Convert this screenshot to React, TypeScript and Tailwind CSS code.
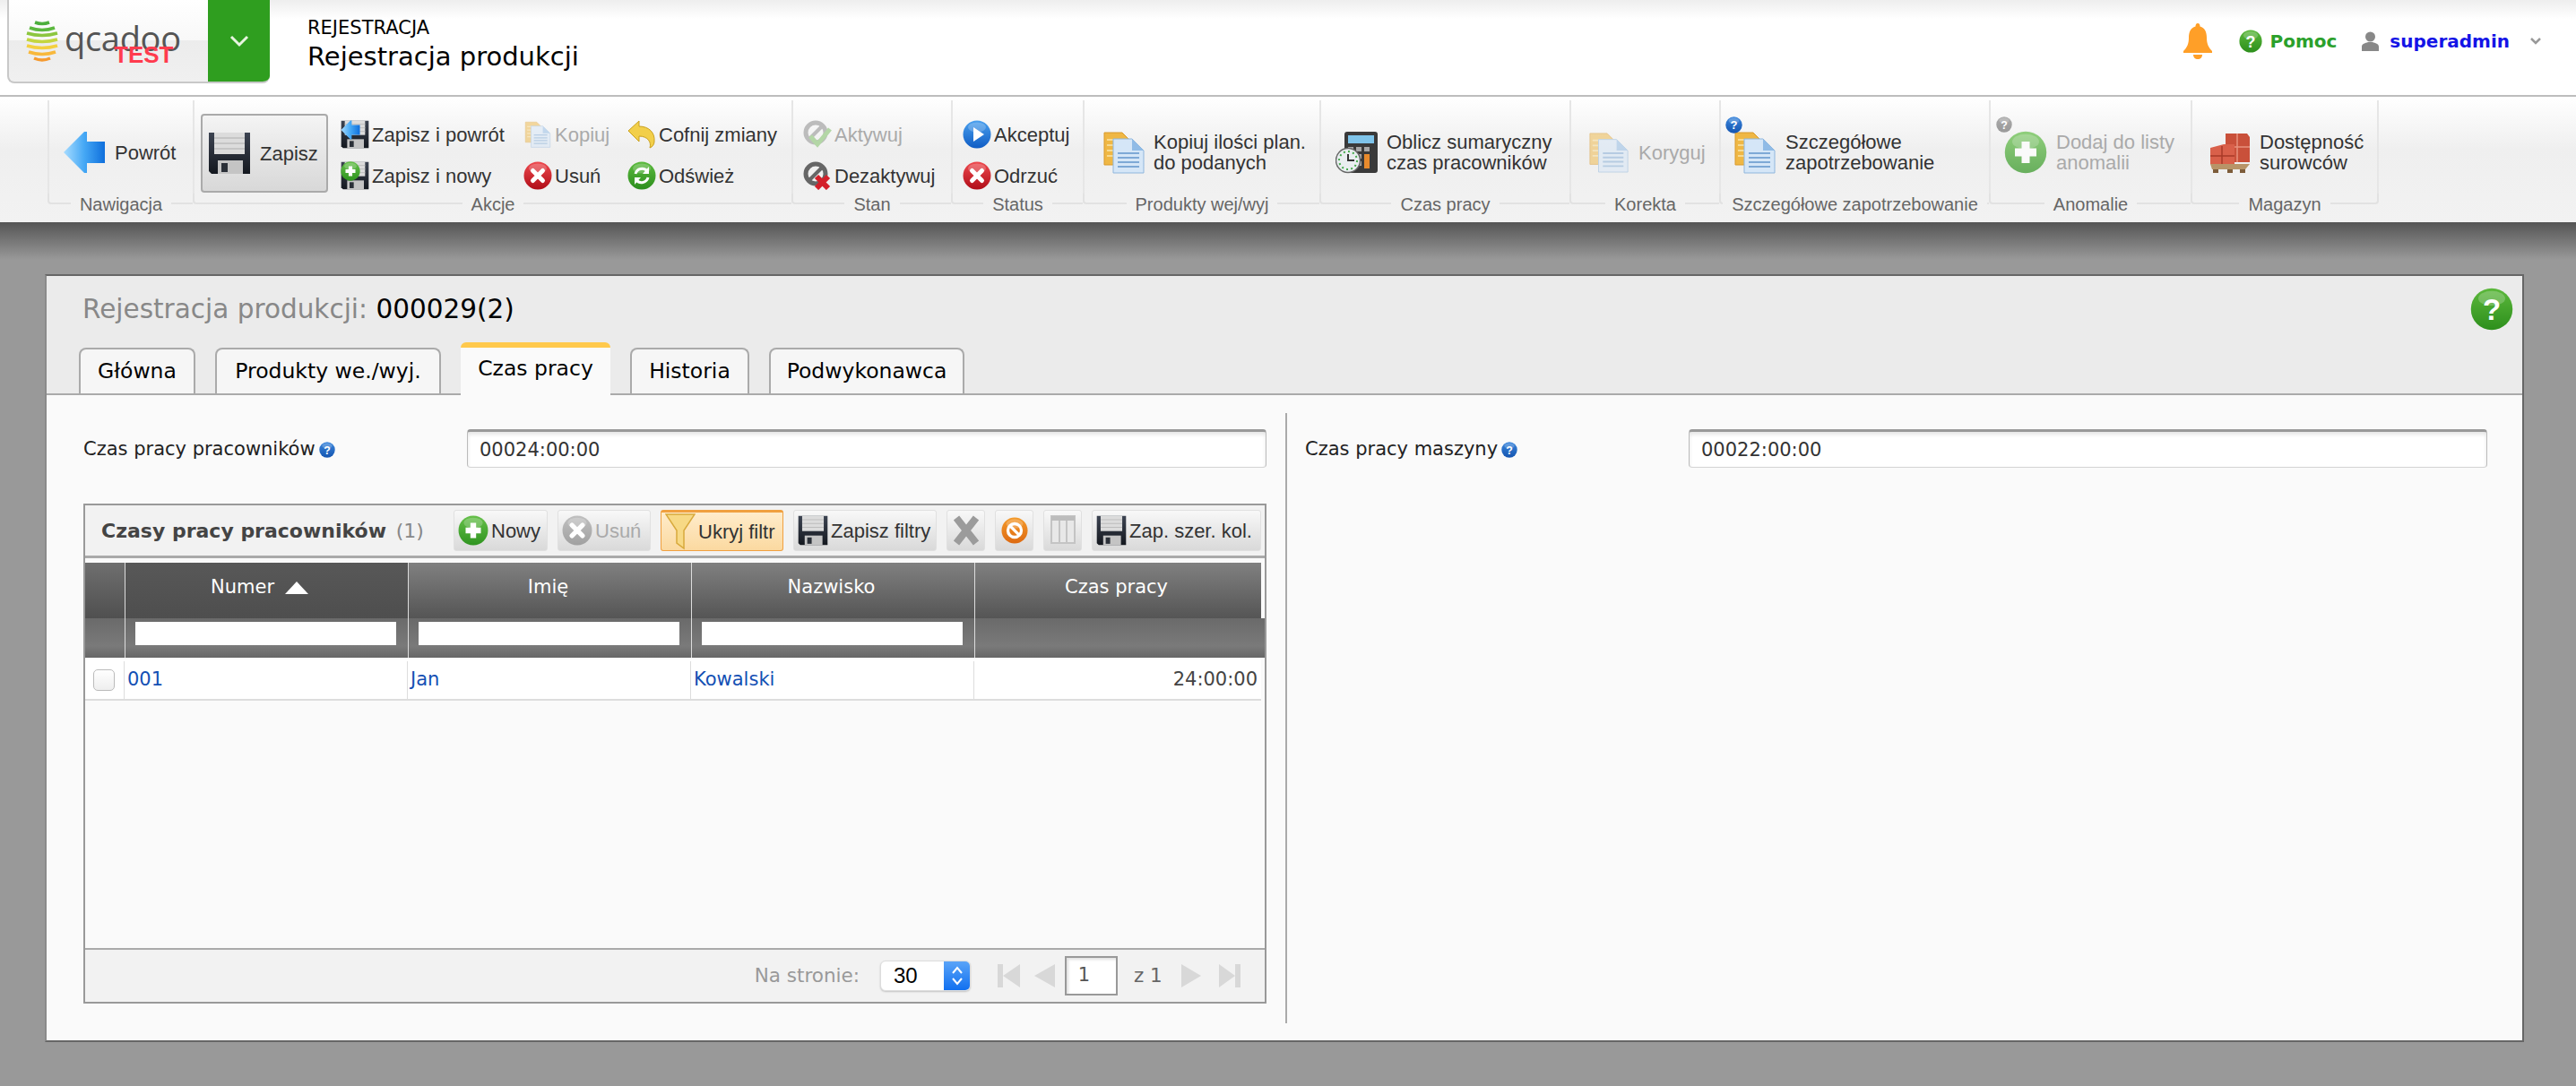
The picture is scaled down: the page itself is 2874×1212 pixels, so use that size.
import { useId, type ReactNode } from "react";

const ARIAL = "font-['Liberation_Sans',Arial,sans-serif]";
const LUCIDA = "font-['DejaVu_Sans',sans-serif]";

function Ball({ from, to, size = 32, children, className }: { from: string; to: string; size?: number; children?: ReactNode; className?: string }) {
  const id = useId();
  return (
    <svg width={size} height={size} viewBox="0 0 32 32" className={className}>
      <defs>
        <linearGradient id={id} x1="0" y1="0" x2="0" y2="1">
          <stop offset="0" stopColor={from} />
          <stop offset="1" stopColor={to} />
        </linearGradient>
      </defs>
      <circle cx="16" cy="16" r="15.5" fill={`url(#${id})`} />
      <ellipse cx="16" cy="8" rx="10" ry="5.5" fill="#fff" opacity="0.22" />
      {children}
    </svg>
  );
}

const XMark = ({ color = "#fff" }: { color?: string }) => (
  <path d="M10.5 10.5 L21.5 21.5 M21.5 10.5 L10.5 21.5" stroke={color} strokeWidth="5" strokeLinecap="round" />
);
const PlusMark = () => <path d="M16 8 V24 M8 16 H24" stroke="#fff" strokeWidth="6" />;
const RedX = ({ size = 32 }: { size?: number }) => (
  <Ball from="#ee4a4f" to="#b00d18" size={size}>
    <XMark />
  </Ball>
);
const GreenPlus = ({ size = 32, className }: { size?: number; className?: string }) => (
  <Ball from="#66c04a" to="#2f9420" size={size} className={className}>
    <PlusMark />
  </Ball>
);
const Refresh = () => (
  <Ball from="#5dbb3f" to="#2c8e1d">
    <path d="M9 14 A7.5 7.5 0 0 1 22 11 M23 18 A7.5 7.5 0 0 1 10 21" stroke="#fff" strokeWidth="3" fill="none" />
    <path d="M24 6 V14 H17 Z M8 26 V18 H15 Z" fill="#fff" />
  </Ball>
);
const HelpBall = ({ size = 26, from = "#5cb83c", to = "#2d8f1c" }: { size?: number; from?: string; to?: string }) => (
  <Ball from={from} to={to} size={size}>
    <text x="16" y="24" textAnchor="middle" fontSize="22" fontWeight="700" fill="#fff" fontFamily="Liberation Sans, sans-serif">?</text>
  </Ball>
);
const InfoDot = () => <HelpBall size={18} from="#3a86dc" to="#1555b0" />;

function Floppy({ size = 48, tone = "#14181f" }: { size?: number; tone?: string }) {
  const id = useId();
  return (
    <svg width={size} height={size} viewBox="0 0 48 48">
      <defs>
        <linearGradient id={id} x1="0" y1="0" x2="0" y2="1">
          <stop offset="0" stopColor="#3d4452" />
          <stop offset="1" stopColor={tone} />
        </linearGradient>
      </defs>
      <path d="M1 1 H47 V47 H4 L1 44 Z" fill={`url(#${id})`} />
      <rect x="7" y="1" width="34" height="24" fill="#dcdcdc" />
      <path d="M7 7 H41 M7 13 H41 M7 19 H41" stroke="#bdbdbd" strokeWidth="1.5" />
      <rect x="11" y="32" width="28" height="15" fill="#c4c4c4" />
      <rect x="15" y="35" width="7" height="10" fill="#2b3038" />
    </svg>
  );
}

function SaveWith({ children }: { children: ReactNode }) {
  return (
    <span className="relative flex h-[32px] w-[32px] shrink-0">
      <Floppy size={32} />
      {children}
    </span>
  );
}

function DocCopy({ size = 48, faded = false }: { size?: number; faded?: boolean }) {
  return (
    <svg width={size} height={size} viewBox="0 0 48 48" opacity={faded ? 0.5 : 1}>
      <path d="M2 2 H22 L30 10 V38 H2 Z" fill="#efb744" stroke="#d99a2b" />
      <path d="M5 10 H14 M5 16 H14 M5 22 H12 M5 28 H12" stroke="#f7da90" strokeWidth="2" />
      <path d="M12 9 H33 L46 22 V47 H12 Z" fill="#d5e6f7" stroke="#8fb6dc" />
      <path d="M33 9 V22 H46 Z" fill="#90bbe6" />
      <path d="M17 25 H41 M17 30 H41 M17 35 H41 M17 40 H41" stroke="#7ea9d6" strokeWidth="2" />
    </svg>
  );
}

function ArrowBack({ size = 48 }: { size?: number }) {
  const id = useId();
  return (
    <svg width={size} height={size} viewBox="0 0 48 48">
      <defs>
        <linearGradient id={id} x1="0" y1="0" x2="1" y2="0">
          <stop offset="0" stopColor="#a8dcff" />
          <stop offset="0.5" stopColor="#45a8f5" />
          <stop offset="1" stopColor="#0f6fdc" />
        </linearGradient>
      </defs>
      <path d="M1 24 L24 1 H27 V12 H47 V36 H27 V47 H24 Z" fill={`url(#${id})`} />
    </svg>
  );
}

const UndoArrow = () => (
  <svg width="32" height="32" viewBox="0 0 32 32">
    <path d="M1 12 L13 1 V7 C24 7 31 14 30 24 C30 27 28 30 25 31 C27 25 23 18 13 18 V24 Z" fill="#f2cf4a" stroke="#c9a01e" strokeWidth="1" />
  </svg>
);

const ActivateIcon = ({ deny = false }: { deny?: boolean }) => (
  <svg width="32" height="32" viewBox="0 0 32 32">
    <circle cx="14" cy="14" r="11" fill="none" stroke={deny ? "#666" : "#bcbcbc"} strokeWidth="5" />
    <path d="M7 21 L21 7" stroke={deny ? "#666" : "#bcbcbc"} strokeWidth="4" />
    {deny ? (
      <path d="M15 17 L28 30 M28 17 L15 30" stroke="#d3202a" strokeWidth="6" />
    ) : (
      <path d="M8 18 L16 27 L30 10" stroke="#b3d6a6" strokeWidth="5" fill="none" />
    )}
  </svg>
);

const Calculator = () => (
  <svg width="48" height="48" viewBox="0 0 48 48">
    <rect x="10" y="1" width="37" height="46" rx="3" fill="#3a3a3a" />
    <rect x="14" y="5" width="29" height="9" fill="#7fc4ea" />
    <g fill="#a8a8a8">
      <rect x="14" y="18" width="6" height="5" />
      <rect x="23" y="18" width="6" height="5" />
      <rect x="32" y="18" width="6" height="5" />
      <rect x="23" y="26" width="6" height="5" />
      <rect x="23" y="34" width="6" height="5" />
    </g>
    <rect x="32" y="26" width="6" height="16" fill="#e88a2c" />
    <circle cx="14" cy="33" r="13.5" fill="#e9eef0" stroke="#666" strokeWidth="1.5" />
    <circle cx="14" cy="33" r="10" fill="none" stroke="#43a84a" strokeWidth="2" strokeDasharray="2 3.2" />
    <path d="M14 26 V33 H21" stroke="#333" strokeWidth="2" fill="none" />
  </svg>
);

const Pallet = () => (
  <svg width="46" height="46" viewBox="0 0 46 46">
    <path d="M18 2 H42 L45 6 V34 H18 Z" fill="#c9503a" />
    <path d="M31 2 V34 M18 17 H45" stroke="#e8917e" strokeWidth="1.5" />
    <path d="M1 18 L16 14 H28 V36 H1 Z" fill="#d9604a" />
    <path d="M1 27 H28 M14 16 V36" stroke="#a83a28" strokeWidth="1.5" />
    <path d="M1 36 H45 L40 42 H3 Z" fill="#b89468" />
    <path d="M4 42 H10 V46 H4 Z M20 42 H26 V46 H20 Z M34 42 H40 V46 H34 Z" fill="#7d5c3a" />
  </svg>
);

const Funnel = () => (
  <svg width="34" height="42" viewBox="0 0 34 42">
    <path d="M1 2 H33 L21 20 V40 L13 34 V20 Z" fill="#f7d985" stroke="#d8a93c" strokeWidth="1.5" />
  </svg>
);

const NoEntry = () => (
  <Ball from="#f49a2a" to="#dd6a12" size={30}>
    <circle cx="16" cy="16" r="8" fill="none" stroke="#fff" strokeWidth="3.5" />
    <path d="M10 10 L22 22" stroke="#fff" strokeWidth="3.5" />
  </Ball>
);

const ColumnsIcon = () => (
  <svg width="28" height="34" viewBox="0 0 28 34">
    <rect x="1" y="1" width="26" height="30" fill="#e8e8e8" stroke="#c4c4c4" strokeWidth="2" />
    <rect x="1" y="1" width="26" height="5" fill="#bcbcbc" />
    <path d="M10 6 V31 M18 6 V31" stroke="#c4c4c4" strokeWidth="2" />
  </svg>
);

function Group({ width, label, children, last = false }: { width: number; label: string; children?: ReactNode; last?: boolean }) {
  return (
    <div style={{ width }} className="flex h-[128px] shrink-0 flex-col">
      <div className={`flex h-[104px] border-l-2 border-[#e6e6e6] pt-[22px] ${last ? "border-r-2" : ""}`}>{children}</div>
      <div className="flex h-[24px] items-start">
        <span className="h-[12px] flex-1 rounded-bl-[4px] border-b-2 border-l-2 border-[#e2e2e2]" />
        <span className={`px-[10px] text-[20px] leading-[24px] whitespace-nowrap text-[#666] ${ARIAL}`}>{label}</span>
        <span className={`h-[12px] flex-1 border-b-2 border-[#e2e2e2] ${last ? "rounded-br-[4px] border-r-2" : ""}`} />
      </div>
    </div>
  );
}

function Small({ icon, label, muted = false }: { icon: ReactNode; label: string; muted?: boolean }) {
  return (
    <div className={`flex h-[32px] items-center gap-[3px] text-[22px] whitespace-nowrap ${muted ? "text-[#aaa]" : "text-[#333]"} ${ARIAL}`}>
      <span className="flex w-[32px] shrink-0 justify-center">{icon}</span>
      {label}
    </div>
  );
}

function Big({ icon, lines, muted = false, ml, gap }: { icon: ReactNode; lines: string[]; muted?: boolean; ml: number; gap: number }) {
  return (
    <div style={{ marginLeft: ml, gap }} className={`flex h-[72px] items-center text-[22px] leading-[23px] whitespace-nowrap ${muted ? "text-[#aaa]" : "text-[#333]"} ${ARIAL}`}>
      {icon}
      <div>
        {lines.map((l) => (
          <div key={l}>{l}</div>
        ))}
      </div>
    </div>
  );
}

function Ribbon() {
  return (
    <div className="flex h-[140px] bg-[linear-gradient(#ffffff,#efefef_42%,#f2f2f2)] pt-[4px] pl-[53px]">
      <Group width={162} label="Nawigacja">
        <Big ml={15} gap={10} icon={<ArrowBack />} lines={["Powrót"]} />
      </Group>
      <Group width={668} label="Akcje">
        <div className={`-mt-[7px] ml-[7px] flex h-[88px] w-[142px] items-center gap-[10px] rounded-[4px] border-2 border-[#aaa] bg-[linear-gradient(#f4f4f4,#d8d8d8)] pl-[6px] text-[22px] text-[#333] ${ARIAL}`}>
          <Floppy />
          Zapisz
        </div>
        <div className="ml-[14px] flex w-[204px] flex-col gap-[14px]">
          <Small icon={<SaveWith><span className="absolute top-0 left-0"><ArrowBack size={22} /></span></SaveWith>} label="Zapisz i powrót" />
          <Small icon={<SaveWith><span className="absolute top-0 left-0"><GreenPlus size={22} /></span></SaveWith>} label="Zapisz i nowy" />
        </div>
        <div className="flex w-[116px] flex-col gap-[14px]">
          <Small muted icon={<DocCopy size={30} faded />} label="Kopiuj" />
          <Small icon={<RedX />} label="Usuń" />
        </div>
        <div className="flex flex-col gap-[14px]">
          <Small icon={<UndoArrow />} label="Cofnij zmiany" />
          <Small icon={<Refresh />} label="Odśwież" />
        </div>
      </Group>
      <Group width={178} label="Stan">
        <div className="ml-[11px] flex flex-col gap-[14px]">
          <Small muted icon={<ActivateIcon />} label="Aktywuj" />
          <Small icon={<ActivateIcon deny />} label="Dezaktywuj" />
        </div>
      </Group>
      <Group width={147} label="Status">
        <div className="ml-[11px] flex flex-col gap-[14px]">
          <Small
            icon={
              <Ball from="#4aa0ee" to="#0f5cc4">
                <path d="M12 8 L24 16 L12 24 Z" fill="#fff" />
              </Ball>
            }
            label="Akceptuj"
          />
          <Small icon={<RedX />} label="Odrzuć" />
        </div>
      </Group>
      <Group width={264} label="Produkty wej/wyj">
        <Big ml={20} gap={9} icon={<DocCopy />} lines={["Kopiuj ilości plan.", "do podanych"]} />
      </Group>
      <Group width={279} label="Czas pracy">
        <Big ml={16} gap={9} icon={<Calculator />} lines={["Oblicz sumaryczny", "czas pracowników"]} />
      </Group>
      <Group width={167} label="Korekta">
        <Big ml={19} gap={10} muted icon={<DocCopy size={46} faded />} lines={["Koryguj"]} />
      </Group>
      <Group width={301} label="Szczegółowe zapotrzebowanie">
        <div className="relative">
          <Big ml={14} gap={10} icon={<DocCopy />} lines={["Szczegółowe", "zapotrzebowanie"]} />
          <span className="absolute -top-[4px] left-[5px]">
            <HelpBall size={19} from="#3a86dc" to="#1555b0" />
          </span>
        </div>
      </Group>
      <Group width={225} label="Anomalie">
        <div className="relative">
          <Big ml={15} gap={10} muted icon={<GreenPlus size={48} className="opacity-70" />} lines={["Dodaj do listy", "anomalii"]} />
          <span className="absolute -top-[4px] left-[6px]">
            <HelpBall size={18} from="#aaa" to="#999" />
          </span>
        </div>
      </Group>
      <Group width={210} label="Magazyn" last>
        <Big ml={19} gap={10} icon={<Pallet />} lines={["Dostępność", "surowców"]} />
      </Group>
    </div>
  );
}

function Logo() {
  return (
    <div className="ml-[8px] flex h-[93px] w-[293px] shrink-0 overflow-hidden rounded-b-[8px] border-b-2 border-l-2 border-[#c8c8c8] bg-[linear-gradient(#ffffff,#f8f8f8_50%,#ececec_50%,#f0f0f0)]">
      <div className="relative w-[222px]">
        <div className="flex h-full items-center pl-[19px]">
          <svg width="36" height="48" viewBox="0 0 36 48">
            <g fill="none" strokeWidth="3.5">
              <path d="M10 3 Q18 6 26 3" stroke="#4cae3c" />
              <path d="M4 9 Q18 14 32 9" stroke="#5cb83f" />
              <path d="M1 15 Q18 20 35 15" stroke="#8cc63f" />
              <path d="M1 22 Q18 27 35 22" stroke="#c4d63f" />
              <path d="M1 29 Q18 34 35 29" stroke="#f4d03f" />
              <path d="M3 36 Q18 41 33 36" stroke="#f8b83c" />
              <path d="M9 43 Q18 47 27 43" stroke="#f59a30" />
            </g>
          </svg>
          <span className="ml-[7px] -mt-[8px] font-['Open_Sans',sans-serif] text-[38px] leading-none font-medium tracking-[-0.3px] text-[#555]">qcadoo</span>
        </div>
        <span className="absolute top-[48px] left-[117px] font-['Liberation_Sans',sans-serif] text-[26px] leading-none font-bold text-[#ff3b4e]">TEST</span>
      </div>
      <div className="flex w-[69px] items-center justify-center bg-[#2f9e1f]">
        <svg width="24" height="16" viewBox="0 0 24 16">
          <path d="M3 3 L12 12 L21 3" stroke="#e8f5e0" strokeWidth="3" fill="none" />
        </svg>
      </div>
    </div>
  );
}

function TopBar() {
  return (
    <div className="flex h-[108px] border-b-2 border-[#bdbdbd] bg-[linear-gradient(#eeeeee,#ffffff_20%)]">
      <Logo />
      <div className={`ml-[42px] pt-[17px] text-black ${LUCIDA}`}>
        <div className="text-[21px] leading-[28px]">REJESTRACJA</div>
        <div className="mt-[1px] text-[29px] leading-[34px]">Rejestracja produkcji</div>
      </div>
      <div className={`ml-auto flex h-[92px] items-center pr-[39px] text-[20px] font-bold ${LUCIDA}`}>
        <svg width="32" height="40" viewBox="0 0 32 40">
          <path d="M16 0 C18 0 18.5 2 18.5 3.5 C24 5 26 10 26 16 C26 23 28 27 32 31 V33 H0 V31 C4 27 6 23 6 16 C6 10 8 5 13.5 3.5 C13.5 2 14 0 16 0 Z" fill="#ff9f28" />
          <path d="M11 35 H21 C21 38 19 40 16 40 C13 40 11 38 11 35 Z" fill="#ff9f28" />
        </svg>
        <span className="ml-[30px] flex">
          <HelpBall />
        </span>
        <span className="ml-[9px] text-[#2ba02b]">Pomoc</span>
        <svg className="ml-[28px]" width="19" height="22" viewBox="0 0 19 22">
          <circle cx="9.5" cy="6" r="5.5" fill="#888" />
          <path d="M0 22 V17 C0 14 4 13 7 12 H12 C15 13 19 14 19 17 V22 Z" fill="#888" />
        </svg>
        <span className="ml-[12px] text-[#1414e6]">superadmin</span>
        <svg className="ml-[23px]" width="12" height="8" viewBox="0 0 12 8">
          <path d="M1 1 L6 6 L11 1" stroke="#999" strokeWidth="2.5" fill="none" />
        </svg>
      </div>
    </div>
  );
}

const TABS = [
  { label: "Główna", w: 130 },
  { label: "Produkty we./wyj.", w: 252 },
  { label: "Czas pracy", w: 167, active: true },
  { label: "Historia", w: 133 },
  { label: "Podwykonawca", w: 218 },
];

function Tabs() {
  return (
    <div className={`flex h-[59px] items-end gap-[22px] border-b-2 border-[#aaa] pl-[36px] text-[23.5px] text-black ${LUCIDA}`}>
      {TABS.map((t) =>
        t.active ? (
          <div key={t.label} style={{ width: t.w }} className="-mb-[2px] flex h-[59px] justify-center rounded-t-[6px] border-t-[6px] border-[#ffc94c] bg-[#fafafa] pt-[6px]">
            {t.label}
          </div>
        ) : (
          <div key={t.label} style={{ width: t.w }} className="flex h-[51px] items-center justify-center rounded-t-[8px] border-2 border-b-0 border-[#aaa] bg-[#f6f6f6]">
            {t.label}
          </div>
        ),
      )}
    </div>
  );
}

function Field({ label, labelWidth, value, inputWidth }: { label: string; labelWidth: number; value: string; inputWidth: number }) {
  return (
    <div className={`mt-[18px] flex h-[43px] items-center text-[21px] text-[#222] ${LUCIDA}`}>
      <div style={{ width: labelWidth }} className="flex shrink-0 items-center gap-[4px] pt-[2px]">
        {label}
        <InfoDot />
      </div>
      <input
        readOnly
        value={value}
        style={{ width: inputWidth }}
        className="h-[43px] rounded-[4px] border border-[#bbb] border-t-[3px] border-t-[#999] border-b-[#d4d4d4] bg-white pl-[13px] text-[21px] text-[#333] shadow-[inset_0_3px_4px_rgba(0,0,0,0.1)] outline-none"
      />
    </div>
  );
}

function ToolButton({ w, children, label, muted = false, on = false }: { w: number; children: ReactNode; label?: string; muted?: boolean; on?: boolean }) {
  const look = on
    ? "border-[#f0a040] border-t-[3px] bg-[linear-gradient(#ffeccb,#fbd9a0)]"
    : "border-[#e0e0e0] bg-[linear-gradient(#f8f8f8,#d9d9d9)]";
  const place = label ? "justify-start pl-[4px]" : "justify-center";
  return (
    <div
      style={{ width: w }}
      className={`flex h-[46px] shrink-0 items-center gap-[3px] rounded-[3px] border ${place} ${look} text-[22px] whitespace-nowrap ${muted ? "text-[#aaa]" : "text-[#333]"} ${ARIAL}`}
    >
      {children}
      {label}
    </div>
  );
}

function GridToolbar() {
  return (
    <div className="flex h-[59px] items-center border-b-[3px] border-[#aaa] bg-[#f2f2f2]">
      <div className={`w-[411px] shrink-0 pl-[18px] text-[22px] font-bold text-[#444] ${LUCIDA}`}>
        Czasy pracy pracowników <span className="ml-[3px] font-normal text-[#888]">(1)</span>
      </div>
      <div className="flex gap-[11px]">
        <ToolButton w={105} label="Nowy">
          <GreenPlus size={34} />
        </ToolButton>
        <ToolButton w={104} label="Usuń" muted>
          <Ball from="#c0c0c0" to="#a0a0a0" size={34}>
            <XMark />
          </Ball>
        </ToolButton>
        <ToolButton w={137} label="Ukryj filtr" on>
          <Funnel />
        </ToolButton>
        <ToolButton w={160} label="Zapisz filtry">
          <Floppy size={34} />
        </ToolButton>
        <ToolButton w={43}>
          <svg width="30" height="34" viewBox="0 0 30 34">
            <path d="M4 3 L26 31 M26 3 L4 31" stroke="#9b9b9b" strokeWidth="8" />
          </svg>
        </ToolButton>
        <ToolButton w={43}>
          <NoEntry />
        </ToolButton>
        <ToolButton w={43}>
          <ColumnsIcon />
        </ToolButton>
        <ToolButton w={189} label="Zap. szer. kol.">
          <Floppy size={34} />
        </ToolButton>
      </div>
    </div>
  );
}

const COLS = "grid grid-cols-[44px_316px_316px_316px_320px]";

function GridTable() {
  const heads = ["Numer", "Imię", "Nazwisko", "Czas pracy"];
  return (
    <div className={`flex flex-1 flex-col bg-[#fafafa] pt-[5px] ${LUCIDA}`}>
      <div className={`${COLS} h-[62px] text-[21px] text-white`}>
        <div className="bg-[linear-gradient(#6f6f6f,#505050)]" />
        {heads.map((h, i) => (
          <div
            key={h}
            className={`flex items-center justify-center gap-[12px] border-l border-[#ddd] pb-[6px] ${i === 0 ? "bg-[linear-gradient(#585858,#4e4e4e)] pr-[16px]" : "bg-[linear-gradient(#808080,#555555)] pr-[4px]"}`}
          >
            {h}
            {i === 0 && (
              <svg width="26" height="14" viewBox="0 0 26 14">
                <path d="M13 0 L26 14 H0 Z" fill="#fff" />
              </svg>
            )}
          </div>
        ))}
      </div>
      <div className={`${COLS} h-[44px] bg-[linear-gradient(#6a6a6a,#7a7a7a_70%,#666666)]`}>
        <div />
        {[0, 1, 2].map((i) => (
          <div key={i} className="border-l border-[#ddd] pt-[4px] pl-[11px]">
            <div className="h-[26px] w-[291px] bg-white" />
          </div>
        ))}
        <div className="border-l border-[#ddd]" />
      </div>
      <div className={`${COLS} mt-[2px] h-[46px] w-[1312px] border-b-2 border-[#ddd] bg-white pt-[2px] text-[21px] text-[#1450b4]`}>
        <div className="flex items-center pl-[9px]">
          <span className="h-[24px] w-[24px] rounded-[5px] border border-[#bbb] bg-[linear-gradient(#ffffff,#eeeeee)]" />
        </div>
        <div className="-ml-[1px] flex items-center border-l border-[#ddd] pl-[3px]">001</div>
        <div className="-ml-[1px] flex items-center border-l border-[#ddd] pl-[3px]">Jan</div>
        <div className="-ml-[1px] flex items-center border-l border-[#ddd] pl-[3px]">Kowalski</div>
        <div className="-ml-[1px] flex items-center justify-end border-l border-[#ddd] pr-[4px] text-[#444]">24:00:00</div>
      </div>
      <div className="flex-1" />
    </div>
  );
}

const PagerGlyph = ({ d, w }: { d: string; w: number }) => (
  <svg width={w} height="26" viewBox={`0 0 ${w} 26`} className="shrink-0">
    <path d={d} fill="#d8d8d8" />
  </svg>
);

function GridFooter() {
  return (
    <div className={`flex h-[60px] items-center justify-end border-t-2 border-[#aaa] bg-[#f2f2f2] pr-[27px] text-[21.5px] ${LUCIDA}`}>
      <span className="text-[#999]">Na stronie:</span>
      <div className="ml-[23px] flex h-[34px] w-[101px] overflow-hidden rounded-[6px] border border-[#ddd] bg-white shadow-[0_1px_2px_rgba(0,0,0,0.2)]">
        <span className={`flex flex-1 items-center pl-[14px] text-[24px] text-black ${ARIAL}`}>30</span>
        <span className="flex w-[29px] items-center justify-center bg-[linear-gradient(#5aa4f8,#1170f0)]">
          <svg width="14" height="24" viewBox="0 0 14 24">
            <path d="M2 9 L7 3 L12 9 M2 15 L7 21 L12 15" stroke="#fff" strokeWidth="2" fill="none" />
          </svg>
        </span>
      </div>
      <span className="ml-[30px] flex">
        <PagerGlyph w={25} d="M0 0 H6 V26 H0 Z M25 0 V26 L6 13 Z" />
      </span>
      <span className="ml-[16px] flex">
        <PagerGlyph w={23} d="M23 0 V26 L0 13 Z" />
      </span>
      <div className="ml-[11px] flex h-[44px] w-[59px] items-center justify-center border-2 border-[#999] bg-white pr-[16px] text-[21px] text-[#555] shadow-[inset_2px_2px_3px_rgba(0,0,0,0.12)]">1</div>
      <span className="ml-[18px] w-[32px] whitespace-nowrap text-[#666]">z 1</span>
      <span className="ml-[21px] flex">
        <PagerGlyph w={22} d="M0 0 V26 L22 13 Z" />
      </span>
      <span className="ml-[20px] flex">
        <PagerGlyph w={24} d="M0 0 V26 L18 13 Z M18 0 H24 V26 H18 Z" />
      </span>
    </div>
  );
}

export default function App() {
  return (
    <div className="flex h-[1212px] w-[2874px] flex-col overflow-hidden bg-[#999]">
      <TopBar />
      <Ribbon />
      <div className="flex-1 bg-[linear-gradient(#555555,#999999_42px)] pt-[58px] pl-[50px]">
        <div className="flex h-[857px] w-[2766px] flex-col border-2 border-l-[#8a8a8a] border-t-[#666] border-r-[#666] border-b-[#666] bg-[#fafafa]">
          <div className="bg-[#ebebeb]">
            <div className="flex h-[74px] items-center justify-between pr-[10px] pl-[40px]">
              <div className={`text-[29.5px] text-[#888] ${LUCIDA}`}>
                Rejestracja produkcji: <span className="text-black">000029(2)</span>
              </div>
              <HelpBall size={48} />
            </div>
            <Tabs />
          </div>
          <div className="mt-[20px] mb-[19px] flex flex-1">
            <div className="flex w-[1384px] flex-col border-r-2 border-[#aaa] pl-[41px]">
              <Field label="Czas pracy pracowników" labelWidth={428} value="00024:00:00" inputWidth={892} />
              <div className="mt-[40px] flex h-[558px] w-[1320px] flex-col border-2 border-[#999]">
                <GridToolbar />
                <GridTable />
                <GridFooter />
              </div>
            </div>
            <div className="pl-[20px]">
              <Field label="Czas pracy maszyny" labelWidth={428} value="00022:00:00" inputWidth={891} />
            </div>
          </div>
        </div>
      </div>
    </div>
  );
}
